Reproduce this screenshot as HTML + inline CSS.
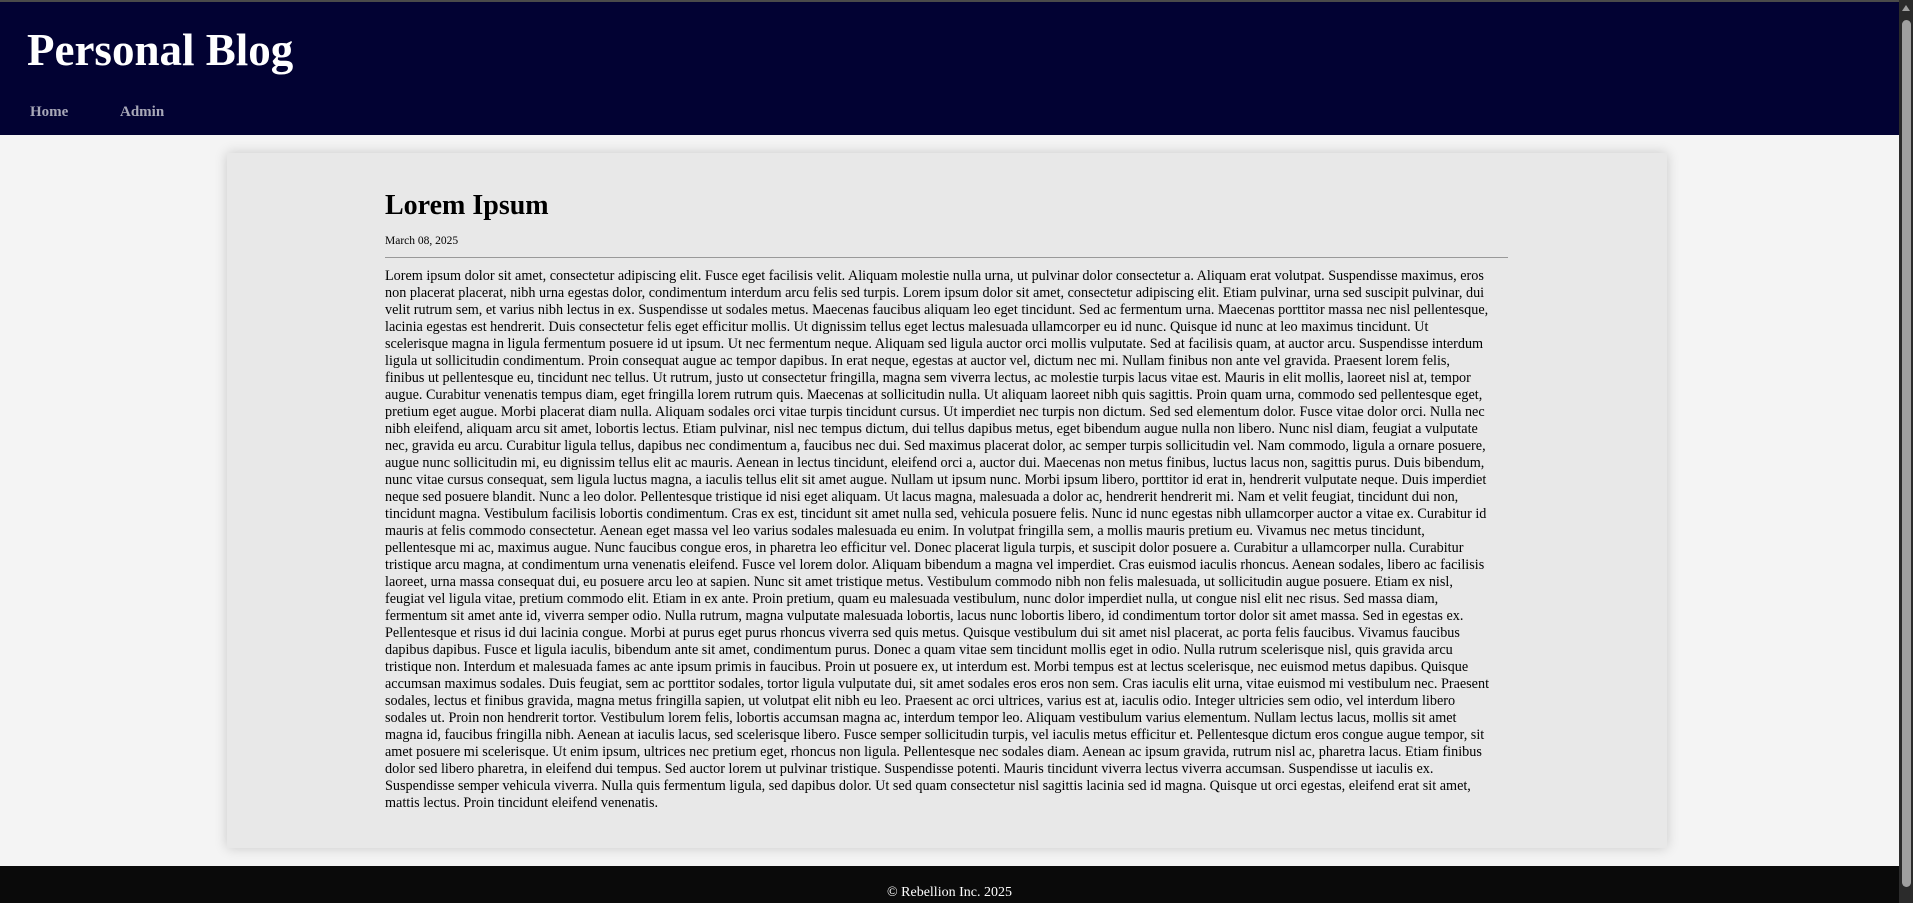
<!DOCTYPE html>
<html><head><meta charset="utf-8"><style>
html,body{margin:0;padding:0}
body{width:1913px;height:903px;overflow:hidden;background:#f4f4f4;font-family:"Liberation Serif",serif;position:relative}
.top{position:absolute;left:0;top:0;width:1899px;height:2px;background:#4a4a4a}
header{position:absolute;left:0;top:2px;width:1899px;height:133px;background:#020233;color:#fff}
header h1{position:absolute;left:27px;top:22px;margin:0;font-size:45px;font-weight:bold;line-height:52px}
nav a{position:absolute;top:102px;color:#a8a8b8;font-weight:bold;font-size:15px;text-decoration:none}
.card{position:absolute;left:227px;top:153px;width:1440px;height:695px;background:#e8e8e8;box-shadow:0 0 12px rgba(0,0,0,.18)}
.in{position:absolute;left:158px;top:36px;width:1123px}
.in h2{margin:0;font-size:28px;line-height:34px;font-weight:bold;color:#000}
.date{font-size:11.5px;margin-top:11px;line-height:14px}
hr{border:0;border-top:1px solid #999;margin:9px 0 10px}
p{margin:0;font-size:14.2px;line-height:17px;color:#000;white-space:nowrap}
footer{position:absolute;left:0;top:866px;width:1899px;height:37px;background:#0a0a0a;color:#fff;font-size:14px;text-align:center;line-height:20px;padding-top:17px;box-sizing:border-box}
.sb{position:absolute;left:1899px;top:0;width:14px;height:903px;background:#2b2b2b}
.th{position:absolute;left:3px;top:20px;width:9px;height:867px;background:#a0a0a0;border-radius:5px}
.ar{position:absolute;left:3px;top:5px;width:0;height:0;border-left:4px solid transparent;border-right:4px solid transparent;border-bottom:6px solid #a0a0a0}
</style></head><body>
<div class="top"></div>
<header><h1>Personal Blog</h1><nav><a style="left:30px">Home</a><a style="left:120px">Admin</a></nav></header>
<div class="card"><div class="in">
<h2>Lorem Ipsum</h2>
<div class="date">March 08, 2025</div>
<hr>
<p>Lorem ipsum dolor sit amet, consectetur adipiscing elit. Fusce eget facilisis velit. Aliquam molestie nulla urna, ut pulvinar dolor consectetur a. Aliquam erat volutpat. Suspendisse maximus, eros<br>
non placerat placerat, nibh urna egestas dolor, condimentum interdum arcu felis sed turpis. Lorem ipsum dolor sit amet, consectetur adipiscing elit. Etiam pulvinar, urna sed suscipit pulvinar, dui<br>
velit rutrum sem, et varius nibh lectus in ex. Suspendisse ut sodales metus. Maecenas faucibus aliquam leo eget tincidunt. Sed ac fermentum urna. Maecenas porttitor massa nec nisl pellentesque,<br>
lacinia egestas est hendrerit. Duis consectetur felis eget efficitur mollis. Ut dignissim tellus eget lectus malesuada ullamcorper eu id nunc. Quisque id nunc at leo maximus tincidunt. Ut<br>
scelerisque magna in ligula fermentum posuere id ut ipsum. Ut nec fermentum neque. Aliquam sed ligula auctor orci mollis vulputate. Sed at facilisis quam, at auctor arcu. Suspendisse interdum<br>
ligula ut sollicitudin condimentum. Proin consequat augue ac tempor dapibus. In erat neque, egestas at auctor vel, dictum nec mi. Nullam finibus non ante vel gravida. Praesent lorem felis,<br>
finibus ut pellentesque eu, tincidunt nec tellus. Ut rutrum, justo ut consectetur fringilla, magna sem viverra lectus, ac molestie turpis lacus vitae est. Mauris in elit mollis, laoreet nisl at, tempor<br>
augue. Curabitur venenatis tempus diam, eget fringilla lorem rutrum quis. Maecenas at sollicitudin nulla. Ut aliquam laoreet nibh quis sagittis. Proin quam urna, commodo sed pellentesque eget,<br>
pretium eget augue. Morbi placerat diam nulla. Aliquam sodales orci vitae turpis tincidunt cursus. Ut imperdiet nec turpis non dictum. Sed sed elementum dolor. Fusce vitae dolor orci. Nulla nec<br>
nibh eleifend, aliquam arcu sit amet, lobortis lectus. Etiam pulvinar, nisl nec tempus dictum, dui tellus dapibus metus, eget bibendum augue nulla non libero. Nunc nisl diam, feugiat a vulputate<br>
nec, gravida eu arcu. Curabitur ligula tellus, dapibus nec condimentum a, faucibus nec dui. Sed maximus placerat dolor, ac semper turpis sollicitudin vel. Nam commodo, ligula a ornare posuere,<br>
augue nunc sollicitudin mi, eu dignissim tellus elit ac mauris. Aenean in lectus tincidunt, eleifend orci a, auctor dui. Maecenas non metus finibus, luctus lacus non, sagittis purus. Duis bibendum,<br>
nunc vitae cursus consequat, sem ligula luctus magna, a iaculis tellus elit sit amet augue. Nullam ut ipsum nunc. Morbi ipsum libero, porttitor id erat in, hendrerit vulputate neque. Duis imperdiet<br>
neque sed posuere blandit. Nunc a leo dolor. Pellentesque tristique id nisi eget aliquam. Ut lacus magna, malesuada a dolor ac, hendrerit hendrerit mi. Nam et velit feugiat, tincidunt dui non,<br>
tincidunt magna. Vestibulum facilisis lobortis condimentum. Cras ex est, tincidunt sit amet nulla sed, vehicula posuere felis. Nunc id nunc egestas nibh ullamcorper auctor a vitae ex. Curabitur id<br>
mauris at felis commodo consectetur. Aenean eget massa vel leo varius sodales malesuada eu enim. In volutpat fringilla sem, a mollis mauris pretium eu. Vivamus nec metus tincidunt,<br>
pellentesque mi ac, maximus augue. Nunc faucibus congue eros, in pharetra leo efficitur vel. Donec placerat ligula turpis, et suscipit dolor posuere a. Curabitur a ullamcorper nulla. Curabitur<br>
tristique arcu magna, at condimentum urna venenatis eleifend. Fusce vel lorem dolor. Aliquam bibendum a magna vel imperdiet. Cras euismod iaculis rhoncus. Aenean sodales, libero ac facilisis<br>
laoreet, urna massa consequat dui, eu posuere arcu leo at sapien. Nunc sit amet tristique metus. Vestibulum commodo nibh non felis malesuada, ut sollicitudin augue posuere. Etiam ex nisl,<br>
feugiat vel ligula vitae, pretium commodo elit. Etiam in ex ante. Proin pretium, quam eu malesuada vestibulum, nunc dolor imperdiet nulla, ut congue nisl elit nec risus. Sed massa diam,<br>
fermentum sit amet ante id, viverra semper odio. Nulla rutrum, magna vulputate malesuada lobortis, lacus nunc lobortis libero, id condimentum tortor dolor sit amet massa. Sed in egestas ex.<br>
Pellentesque et risus id dui lacinia congue. Morbi at purus eget purus rhoncus viverra sed quis metus. Quisque vestibulum dui sit amet nisl placerat, ac porta felis faucibus. Vivamus faucibus<br>
dapibus dapibus. Fusce et ligula iaculis, bibendum ante sit amet, condimentum purus. Donec a quam vitae sem tincidunt mollis eget in odio. Nulla rutrum scelerisque nisl, quis gravida arcu<br>
tristique non. Interdum et malesuada fames ac ante ipsum primis in faucibus. Proin ut posuere ex, ut interdum est. Morbi tempus est at lectus scelerisque, nec euismod metus dapibus. Quisque<br>
accumsan maximus sodales. Duis feugiat, sem ac porttitor sodales, tortor ligula vulputate dui, sit amet sodales eros eros non sem. Cras iaculis elit urna, vitae euismod mi vestibulum nec. Praesent<br>
sodales, lectus et finibus gravida, magna metus fringilla sapien, ut volutpat elit nibh eu leo. Praesent ac orci ultrices, varius est at, iaculis odio. Integer ultricies sem odio, vel interdum libero<br>
sodales ut. Proin non hendrerit tortor. Vestibulum lorem felis, lobortis accumsan magna ac, interdum tempor leo. Aliquam vestibulum varius elementum. Nullam lectus lacus, mollis sit amet<br>
magna id, faucibus fringilla nibh. Aenean at iaculis lacus, sed scelerisque libero. Fusce semper sollicitudin turpis, vel iaculis metus efficitur et. Pellentesque dictum eros congue augue tempor, sit<br>
amet posuere mi scelerisque. Ut enim ipsum, ultrices nec pretium eget, rhoncus non ligula. Pellentesque nec sodales diam. Aenean ac ipsum gravida, rutrum nisl ac, pharetra lacus. Etiam finibus<br>
dolor sed libero pharetra, in eleifend dui tempus. Sed auctor lorem ut pulvinar tristique. Suspendisse potenti. Mauris tincidunt viverra lectus viverra accumsan. Suspendisse ut iaculis ex.<br>
Suspendisse semper vehicula viverra. Nulla quis fermentum ligula, sed dapibus dolor. Ut sed quam consectetur nisl sagittis lacinia sed id magna. Quisque ut orci egestas, eleifend erat sit amet,<br>
mattis lectus. Proin tincidunt eleifend venenatis.</p>
</div></div>
<footer>© Rebellion Inc. 2025</footer>
<div class="sb"><div class="ar"></div><div class="th"></div></div>
</body></html>
